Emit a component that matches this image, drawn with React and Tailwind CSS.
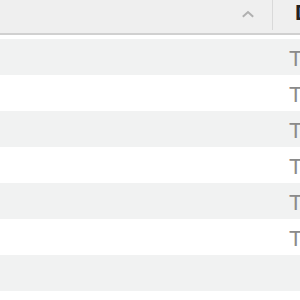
import React from "react";

const rows = ["T", "T", "T", "T", "T", "T", ""];

const App = () => {
  return (
    <div className="w-[300px] h-[300px] overflow-hidden bg-white font-['Liberation_Sans',Arial,sans-serif]">
      <div className="w-[420px]">
        <div className="flex h-[35px] bg-[#efefef] border-b-2 border-[#d0d0d0]">
          <div className="w-[272px] flex justify-end items-start pr-[17px] pt-[10px]">
            <svg width="14" height="8" viewBox="0 0 14 8" fill="none">
              <path d="M1.8 6.8 L7 2 L12.2 6.8" stroke="#b0b0b0" strokeWidth="2" />
            </svg>
          </div>
          <div className="w-px h-[30px] bg-[#d9d9d9]" />
          <div className="pl-[22px] text-[22px] font-bold text-[#222] leading-[26px]">
            D
          </div>
        </div>
        <div className="mt-[4px]">
          {rows.map((t, i) => (
            <div
              key={i}
              className={`flex h-9 items-center ${i % 2 === 0 ? "bg-[#f1f2f2]" : "bg-white"}`}
            >
              <div className="w-[273px]" />
              <div className="pl-[16px] pt-[3px] text-[22px] text-[#8a8a8a] leading-none">
                {t}
              </div>
            </div>
          ))}
        </div>
      </div>
    </div>
  );
};

export default App;
